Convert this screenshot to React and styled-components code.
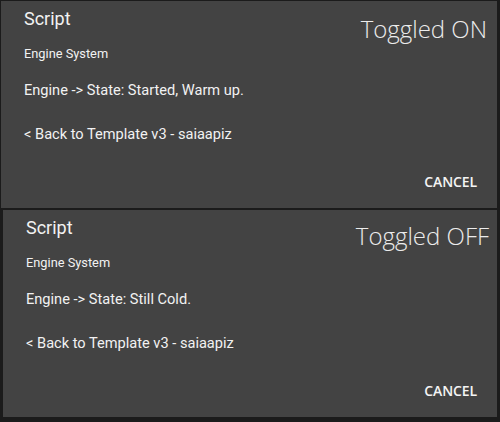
import React from "react";
import styled, { createGlobalStyle } from "styled-components";

const Global = createGlobalStyle`
  html, body { margin: 0; padding: 0; background: #1b1b1b; }
  body { width: 500px; height: 422px; overflow: hidden; }
`;

const Page = styled.div`
  display: flex;
  flex-direction: column;
  gap: 2px;
  padding-top: 1px;
  width: 500px;
  height: 422px;
  box-sizing: border-box;
  background: #1b1b1b;
`;

const Panel = styled.section`
  position: relative;
  display: flex;
  flex-direction: column;
  height: 207px;
  box-sizing: border-box;
  margin-left: ${(p) => p.$inset}px;
  margin-right: 3px;
  padding: 6px 20px 16px 23px;
  background: #434343;
  color: #f2f2f2;
  font-family: Roboto, "Liberation Sans", sans-serif;
`;

const Title = styled.h2`
  margin: 0;
  font-size: 18px;
  font-weight: 400;
  line-height: 24px;
`;

const Subtitle = styled.div`
  margin-top: 13px;
  font-size: 12.8px;
  line-height: 20px;
`;

const Line = styled.div`
  margin-top: ${(p) => p.$gap}px;
  font-size: 14.6px;
  line-height: 22px;
`;

const Footer = styled.div`
  margin-top: auto;
  display: flex;
  justify-content: flex-end;
`;

const Button = styled.button`
  background: none;
  border: none;
  padding: 0;
  color: #f4f4f4;
  font-family: "Open Sans", "Liberation Sans", sans-serif;
  font-weight: 600;
  font-size: 14px;
  line-height: 20px;
  letter-spacing: -0.1px;
`;

const Note = styled.div`
  position: absolute;
  top: ${(p) => p.$top}px;
  right: ${(p) => p.$right}px;
  font-family: "Open Sans", "Liberation Sans", sans-serif;
  font-weight: 300;
  font-size: 24px;
  line-height: 30px;
  color: #ececec;
`;

const dialogs = [
  { note: "Toggled ON", state: "Engine -> State: Started, Warm up.", inset: 1, top: 13, right: 10 },
  { note: "Toggled OFF", state: "Engine -> State: Still Cold.", inset: 3, top: 11, right: 8 },
];

export default function App() {
  return (
    <>
      <Global />
      <Page>
        {dialogs.map((d) => (
          <Panel key={d.note} $inset={d.inset}>
            <Title>Script</Title>
            <Subtitle>Engine System</Subtitle>
            <Line $gap={15}>{d.state}</Line>
            <Line $gap={22}>&lt; Back to Template v3 - saiaapiz</Line>
            <Footer>
              <Button>CANCEL</Button>
            </Footer>
            <Note $top={d.top} $right={d.right}>{d.note}</Note>
          </Panel>
        ))}
      </Page>
    </>
  );
}
